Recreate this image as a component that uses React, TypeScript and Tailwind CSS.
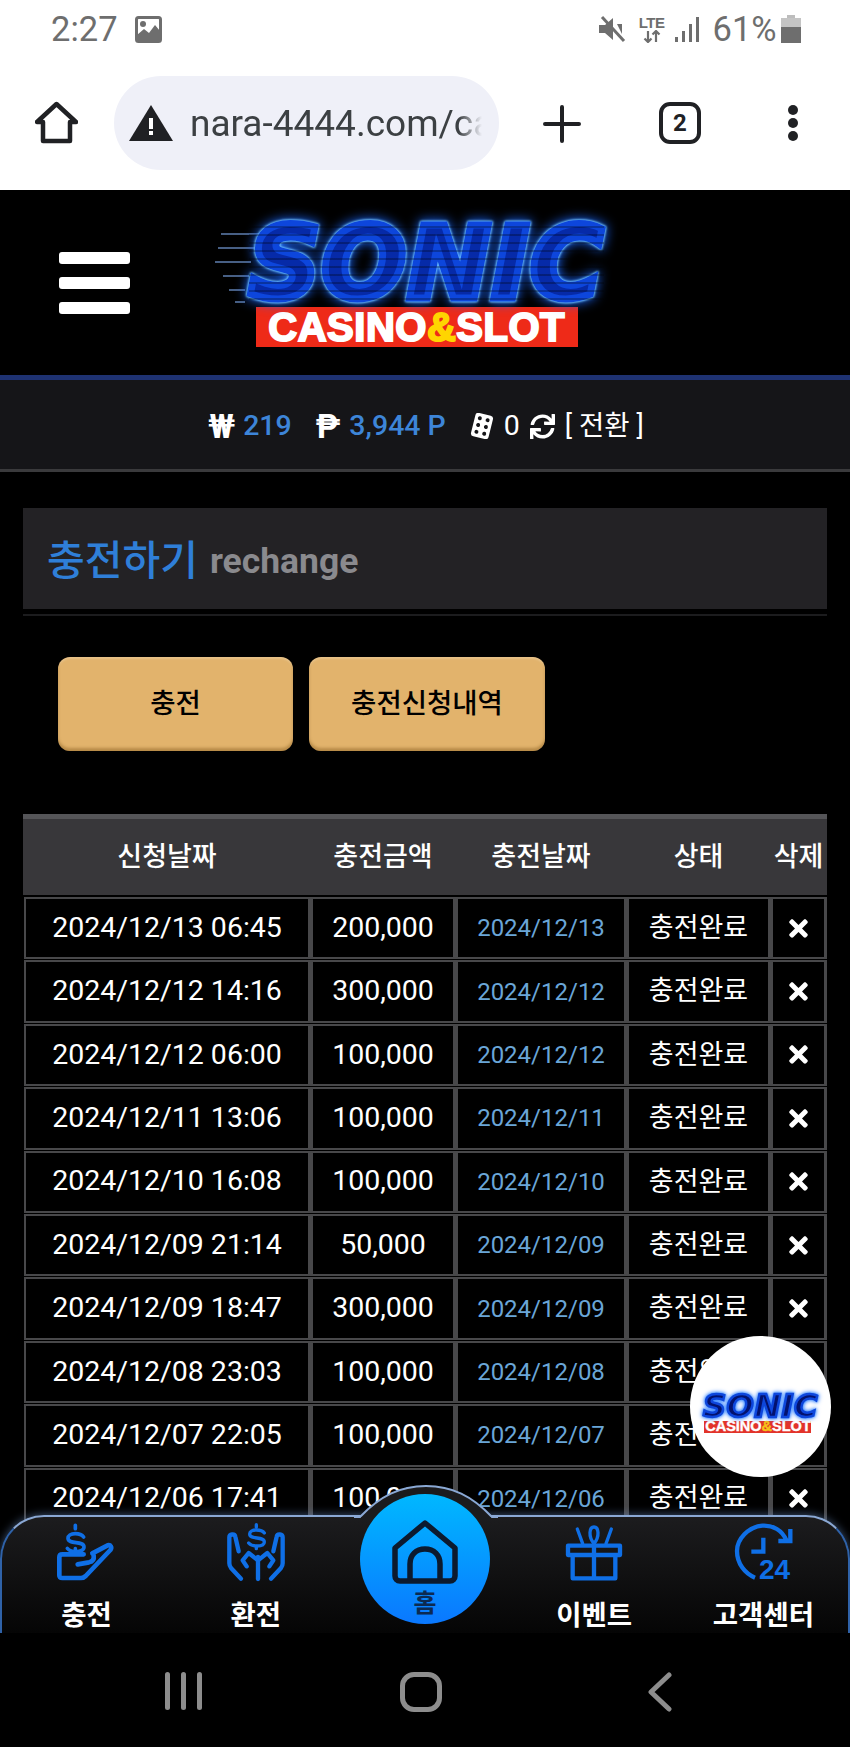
import { FaTimes, FaSync } from "react-icons/fa";

const rows = [
  ["2024/12/13 06:45", "200,000", "2024/12/13"],
  ["2024/12/12 14:16", "300,000", "2024/12/12"],
  ["2024/12/12 06:00", "100,000", "2024/12/12"],
  ["2024/12/11 13:06", "100,000", "2024/12/11"],
  ["2024/12/10 16:08", "100,000", "2024/12/10"],
  ["2024/12/09 21:14", "50,000", "2024/12/09"],
  ["2024/12/09 18:47", "300,000", "2024/12/09"],
  ["2024/12/08 23:03", "100,000", "2024/12/08"],
  ["2024/12/07 22:05", "100,000", "2024/12/07"],
  ["2024/12/06 17:41", "100,000", "2024/12/06"],
];

const gridCols = "grid grid-cols-[286px_144px_170px_143px_55px] gap-x-px";

// Sonic logo, big one in the header and small one in the floating button
const Logo = ({ small = false }: { small?: boolean }) => (
  <div className="relative flex flex-col items-center">
    {!small && (
      <svg className="absolute left-[-34px] top-[6px]" width="50" height="76" viewBox="0 0 50 76" stroke="#5f7fb0" strokeWidth="1.5">
        <path d="M6 2h44M3 16h40M0 30h36M8 44h26M14 58h16M20 70h10" />
      </svg>
    )}
    <div className="relative">
      <div
        className={
          small
            ? "h-[28px] font-['DejaVu_Sans',sans-serif] text-[32px] leading-[28px] font-bold italic tracking-[0.5px] whitespace-nowrap text-[#03126e] [-webkit-text-stroke:2.5px_#0d46dc] [filter:drop-shadow(0_0_1px_#4f9dff)_drop-shadow(0_0_2px_#2a78ff)]"
            : "h-[76px] font-['DejaVu_Sans',sans-serif] text-[99px] leading-[76px] font-bold italic tracking-[1.5px] whitespace-nowrap text-[#062aa8] [-webkit-text-stroke:7px_#0d46dc] [filter:drop-shadow(0_0_1px_#6cc0ff)_drop-shadow(0_0_1px_#6cc0ff)_drop-shadow(0_0_6px_#1a66ff)]"
        }
      >
        SONIC
      </div>
      {/* dark scan lines across the letters */}
      {!small && (
        <div className="absolute inset-0 bg-[repeating-linear-gradient(180deg,rgba(0,0,0,0.28)_0px,rgba(0,0,0,0.28)_2px,transparent_2px,transparent_8px)]" />
      )}
    </div>
    <div
      className={
        small
          ? "mt-px mr-[5px] flex h-[12px] w-[107px] items-center justify-center bg-[#e2332a] font-['Liberation_Sans',sans-serif] text-[14.5px] font-bold text-white [-webkit-text-stroke:0.4px_#fff]"
          : "mt-[5px] mr-[20px] flex h-[40px] w-[322px] items-center justify-center bg-[#ee2a18] font-['Liberation_Sans',sans-serif] text-[40px] font-bold tracking-[0.5px] text-white [-webkit-text-stroke:2px_#fff]"
      }
    >
      CASINO
      <span className={small ? "text-[#f5c518] [-webkit-text-stroke:0.4px_#f5c518]" : "text-[#ffd500] [-webkit-text-stroke:2px_#ffd500]"}>&amp;</span>
      SLOT
    </div>
  </div>
);

const StatusBar = () => (
  <div className="flex h-[58px] items-center bg-white pl-[51px] text-[#6e6e6e]">
    <span className="text-[34.5px] leading-none">2:27</span>
    <svg className="ml-[17px]" width="27" height="27" viewBox="0 0 27 27">
      <rect x="1.5" y="1.5" width="24" height="24" rx="2" fill="#fff" stroke="#6e6e6e" strokeWidth="3" />
      <circle cx="8" cy="8" r="3" fill="#6e6e6e" />
      <path d="M2 24v-5l7-6 5 4 6-8 5 6v9z" fill="#6e6e6e" />
    </svg>
    <svg className="ml-[436px]" width="28" height="28" viewBox="0 0 28 28" fill="#6e6e6e">
      <path d="M1 10h6l8-7v22l-8-7H1z" />
      <path d="M4 2l22 24" stroke="#6e6e6e" strokeWidth="3" />
      <path d="M19 9l5 0 0 10z" />
    </svg>
    <div className="ml-[12px] flex w-[28px] flex-col items-center font-['Liberation_Sans',sans-serif] leading-none">
      <span className="text-[15px] leading-[15px] font-bold tracking-[-0.5px]">LTE</span>
      <svg width="20" height="13" viewBox="0 0 20 13" stroke="#6e6e6e" strokeWidth="2.2" fill="none">
        <path d="M6 1v11M2.5 8.5L6 12l3.500-3.500M14 12V1M10.500 4.500L14 1l3.500 3.500" />
      </svg>
    </div>
    <svg className="ml-[8px]" width="27" height="28" viewBox="0 0 27 28" fill="#6e6e6e">
      <rect x="1" y="22" width="3" height="5" />
      <rect x="8" y="16" width="3" height="11" />
      <rect x="15" y="9" width="3" height="18" />
      <rect x="22" y="2" width="3" height="25" />
    </svg>
    <span className="ml-[12px] text-[34.5px] leading-none">61%</span>
    <div className="ml-[4px] flex h-[28px] w-[20px] flex-col items-center">
      <div className="h-[3px] w-[8px] bg-[#bdbdbd]" />
      <div className="h-[9px] w-full bg-[#c4c4c4]" />
      <div className="h-[16px] w-full bg-[#6e6e6e]" />
    </div>
  </div>
);

const BrowserBar = () => (
  <div className="flex h-[132px] items-start bg-white pt-[18px] pl-[35px]">
    <svg className="mt-[25px]" width="43" height="43" viewBox="0 0 43 43" fill="none" stroke="#202124" strokeWidth="4.500" strokeLinejoin="round">
      <path d="M21.500 3L2 21h6v19h27V21h6z" />
    </svg>
    <div className="ml-[36px] flex h-[94px] w-[385px] items-center rounded-[47px] bg-[#eff0f8] pl-[15px]">
      <svg width="44" height="36" viewBox="0 0 44 36">
        <path d="M22 0L44 36H0z" fill="#202124" />
        <rect x="20" y="13" width="4" height="11" fill="#fff" />
        <rect x="20" y="26" width="4" height="4" fill="#fff" />
      </svg>
      <div className="ml-[17px] w-[292px] overflow-hidden text-[37px] leading-none whitespace-nowrap text-[#3c4043] [mask-image:linear-gradient(90deg,#000_92%,transparent)]">nara-4444.com/ca</div>
    </div>
    <svg className="mt-[29px] ml-[44px]" width="38" height="38" viewBox="0 0 38 38" stroke="#202124" strokeWidth="4" strokeLinecap="round">
      <path d="M19 2v34M2 19h34" />
    </svg>
    <div className="mt-[26px] ml-[78px] flex h-[42px] w-[42px] items-center justify-center rounded-[11px] border-[4px] border-[#202124] text-[24px] leading-none font-bold text-[#202124]">2</div>
    <div className="mt-[29px] ml-[84px] flex h-[36px] w-[16px] flex-col items-center justify-between">
      <div className="h-[10px] w-[10px] rounded-full bg-[#202124]" />
      <div className="h-[10px] w-[10px] rounded-full bg-[#202124]" />
      <div className="h-[10px] w-[10px] rounded-full bg-[#202124]" />
    </div>
  </div>
);

const Balance = () => (
  <div className="flex h-[92px] items-center justify-center border-b-[3px] border-[#3a3a3c] bg-[#151518] pt-[3px] pl-[2px] text-[28.5px] text-white">
    <span className="text-[33px] leading-none font-bold">₩</span>
    <span className="ml-[8px] font-medium text-[#3d85d8]">219</span>
    <span className="ml-[24px] text-[33px] leading-none font-bold">₱</span>
    <span className="ml-[9px] font-medium text-[#3d85d8]">3,944 P</span>
    <svg className="ml-[23px]" width="26" height="26" viewBox="0 0 26 26">
      <g transform="rotate(14 13 13)">
        <rect x="4" y="1" width="18" height="24" rx="3" fill="#fff" />
        <circle cx="9" cy="6" r="2" fill="#151518" />
        <circle cx="17" cy="6" r="2" fill="#151518" />
        <circle cx="9" cy="13" r="2" fill="#151518" />
        <circle cx="17" cy="13" r="2" fill="#151518" />
        <circle cx="9" cy="20" r="2" fill="#151518" />
        <circle cx="17" cy="20" r="2" fill="#151518" />
      </g>
    </svg>
    <span className="ml-[9px]">0</span>
    <FaSync className="ml-[10px]" size={25} />
    <span className="ml-[10px] text-[27.5px]">[ 전환 ]</span>
  </div>
);

const Cell = ({ children, className = "" }: { children: React.ReactNode; className?: string }) => (
  <div className={`flex h-[62.4px] items-center justify-center border-2 border-[#48484a] bg-black ${className}`}>{children}</div>
);

const Table = () => (
  <div className="mx-[23px] mt-[63px] w-[804px]">
    <div className={`${gridCols} h-[81px] items-center border-t-[5px] border-[#555558] bg-[#38373a] pl-px text-center text-[27px] font-medium text-white`}>
      <div>신청날짜</div>
      <div>충전금액</div>
      <div>충전날짜</div>
      <div>상태</div>
      <div className="whitespace-nowrap">삭제</div>
    </div>
    <div className="mt-[2px] flex flex-col gap-y-px pl-px">
      {rows.map((row) => (
        <div key={row[0]} className={`${gridCols} bg-[#48484a] text-center text-[28.5px] text-white`}>
          <Cell>{row[0]}</Cell>
          <Cell>{row[1]}</Cell>
          <Cell className="text-[24px] text-[#6aa6d8]">{row[2]}</Cell>
          <Cell className="text-[27px]">충전완료</Cell>
          <Cell>
            <FaTimes size={27} />
          </Cell>
        </div>
      ))}
    </div>
  </div>
);

const IconCharge = () => (
  <svg width="60" height="60" viewBox="170 125 180 180" fill="none" stroke="#0f6fe6" strokeWidth="14" strokeLinecap="round" strokeLinejoin="round">
    <path d="M250 170c-6-8-14-10-25-10-14 0-22 6-22 14 0 20 48 6 48 26 0 8-10 14-24 14-12 0-20-3-26-10" strokeWidth="11" />
    <path d="M225 135v10M225 205v8" strokeWidth="11" />
    <path d="M250 222h-64c-6 0-9 3-9 9v54c0 6 3 8 9 8h56c6 0 10-2 14-6l74-78c6-8 1-16-8-14l-46 24" />
    <path d="M232 252l34-6c10-2 16-8 14-20" />
  </svg>
);

const IconExchange = () => (
  <svg width="60" height="60" viewBox="675 125 180 180" fill="none" stroke="#0f6fe6" strokeWidth="13" strokeLinecap="round" strokeLinejoin="round">
    <path d="M790 158c-5-7-13-9-24-9-12 0-20 5-20 12 0 18 44 6 44 24 0 8-10 12-22 12-12 0-20-3-25-9" strokeWidth="10" />
    <path d="M766 133v8M766 198v7" strokeWidth="10" />
    <path d="M771 230v66" />
    <path d="M771 240l-28-22-18 22 12 18" />
    <path d="M771 240l28-22 18 22-12 18" />
    <path d="M720 295l-30-32c-4-5-5-8-5-14v-78c0-10 16-12 18-2l10 44" />
    <path d="M810 295l30-32c4-5 5-8 5-14v-78c0-10-16-12-18-2l-10 44" />
  </svg>
);

const IconGift = () => (
  <svg width="60" height="60" viewBox="420 125 180 180" fill="none" stroke="#0f6fe6" strokeWidth="13" strokeLinejoin="round">
    <path d="M432 196h156v28H432zM446 224h128v70H446zM510 196v98" />
    <path d="M510 190c-18-22-14-50 0-50s18 28 0 50zM460 146l16 44M562 146l-16 44" strokeLinecap="round" strokeWidth="10" />
  </svg>
);

const IconSupport = () => (
  <svg width="60" height="60" viewBox="930 125 180 180" fill="none" stroke="#0f6fe6" strokeWidth="13">
    <path d="M1090 180c-12-30-40-46-72-44-42 4-76 40-76 76 0 38 24 68 54 80" />
    <path d="M1102 146v36h-36" />
    <path d="M1021 172v42h-36" />
    <text x="1008" y="297" fill="#0f6fe6" stroke="none" fontFamily="Liberation Sans, sans-serif" fontSize="84" fontWeight="700">24</text>
  </svg>
);

const NavItem = ({ label, children }: { label: string; children: React.ReactNode }) => (
  <div className="flex flex-col items-center pt-[5px]">
    {children}
    <span className="mt-[19px] text-[27.5px] leading-[30px] font-bold whitespace-nowrap text-white">{label}</span>
  </div>
);

const BottomNav = () => (
  <div className="absolute right-0 bottom-0 left-0 h-[118px] rounded-t-[44px] border-x-2 border-t-2 border-x-[#2f62a8] border-t-[#8aa8d4] bg-[linear-gradient(180deg,#1c1c1e,#050505)] shadow-[0_-1px_8px_rgba(120,160,220,0.45)]">
    {/* raised arc behind the home button */}
    <svg className="absolute top-[-33px] left-[352px]" width="144" height="36" viewBox="0 0 144 36" fill="#1b1b1d" stroke="#8aa8d4" strokeWidth="2">
      <path d="M0 33h6C26 12 46 2 72 2s46 10 66 31h6" />
      <path d="M7 33h130v3H7z" stroke="none" />
    </svg>
    <div className="relative grid h-full grid-cols-5 overflow-visible">
      <NavItem label="충전">
        <IconCharge />
      </NavItem>
      <NavItem label="환전">
        <IconExchange />
      </NavItem>
      <div className="flex justify-center">
        <div className="-mt-[23px] flex h-[130px] w-[130px] flex-col items-center rounded-full bg-[linear-gradient(180deg,#00b8ff,#0a78ff)] pt-[26px]">
          <svg width="66" height="64" viewBox="0 0 66 64" fill="none" stroke="#0c1a2e" strokeWidth="5.500" strokeLinejoin="round">
            <path d="M33 3L3 28v28c0 3 2 5 5 5h50c3 0 5-2 5-5V28z" />
            <path d="M18 61V44c0-9 6-15 15-15s15 6 15 15v17" />
          </svg>
          <span className="mt-[5px] text-[25px] leading-[30px] font-bold text-[#0c2a52]">홈</span>
        </div>
      </div>
      <NavItem label="이벤트">
        <IconGift />
      </NavItem>
      <NavItem label="고객센터">
        <IconSupport />
      </NavItem>
    </div>
  </div>
);

const SystemNav = () => (
  <div className="flex h-[114px] items-start bg-black pt-[39px] pl-[165px]">
    <div className="flex h-[38px] gap-x-[11px]">
      <div className="w-[5px] rounded-full bg-[#8d8d8d]" />
      <div className="w-[5px] rounded-full bg-[#8d8d8d]" />
      <div className="w-[5px] rounded-full bg-[#8d8d8d]" />
    </div>
    <div className="ml-[198px] h-[40px] w-[42px] rounded-[14px] border-[5px] border-[#8d8d8d]" />
    <svg className="ml-[206px]" width="24" height="40" viewBox="0 0 24 40" fill="none" stroke="#8d8d8d" strokeWidth="5" strokeLinecap="round" strokeLinejoin="round">
      <path d="M21 3L3 20l18 17" />
    </svg>
  </div>
);

export default function App() {
  return (
    <div className="flex h-[1747px] w-[850px] flex-col overflow-hidden bg-black font-['Roboto','Noto_Sans_CJK_KR',sans-serif]">
      <StatusBar />
      <BrowserBar />
      <div className="relative flex-1 overflow-hidden">
        <div className="flex h-[190px] items-center border-b-[5px] border-[#1e3272] pl-[59px]">
          <div className="flex flex-col gap-y-[13px]">
            <div className="h-[12px] w-[71px] rounded-[3px] bg-white" />
            <div className="h-[12px] w-[71px] rounded-[3px] bg-white" />
            <div className="h-[12px] w-[71px] rounded-[3px] bg-white" />
          </div>
          <div className="mt-[8px] ml-[119px]">
            <Logo />
          </div>
        </div>
        <Balance />
        <div className="mx-[23px] mt-[36px] flex h-[101px] w-[804px] items-center bg-[#232225] pt-[6px] pl-[24px]">
          <span className="text-[41px] leading-none font-medium text-[#2f7fd8]">충전하기</span>
          <span className="ml-[12px] text-[35.5px] leading-none font-bold text-[#8a8a8e]">rechange</span>
        </div>
        <div className="mx-[23px] mt-[5px] h-[2px] w-[804px] bg-[#1c1c1e]" />
        <div className="mt-[41px] ml-[58px] flex gap-x-[16px]">
          <button className="h-[94px] w-[235px] rounded-[12px] bg-[#e2b36c] text-[27.5px] font-medium text-black shadow-[inset_0_-3px_3px_rgba(120,80,20,0.4),inset_0_2px_2px_rgba(255,255,255,0.2)]">충전</button>
          <button className="h-[94px] w-[236px] rounded-[12px] bg-[#e2b36c] text-[27.5px] font-medium text-black shadow-[inset_0_-3px_3px_rgba(120,80,20,0.4),inset_0_2px_2px_rgba(255,255,255,0.2)]">충전신청내역</button>
        </div>
        <Table />
        <div className="absolute right-[19px] bottom-[156px] flex h-[141px] w-[141px] items-center justify-center rounded-full bg-white pt-[11px]">
          <Logo small />
        </div>
        <BottomNav />
      </div>
      <SystemNav />
    </div>
  );
}
